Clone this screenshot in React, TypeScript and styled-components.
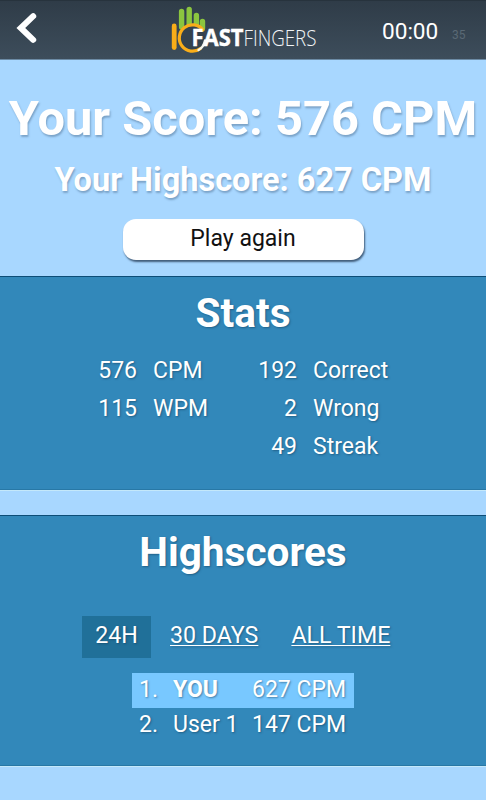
import React from "react";
import styled, { createGlobalStyle, css } from "styled-components";

const GlobalStyle = createGlobalStyle`
  * { box-sizing: border-box; }
  body {
    margin: 0;
    background: #a8d7ff;
    font-family: Roboto, "Liberation Sans", sans-serif;
    overflow: hidden;
  }
`;

const Page = styled.main`
  display: flex;
  flex-direction: column;
  width: 486px;
  height: 800px;
  background: #a8d7ff;
  color: #fff;
  font-size: 23px;
  line-height: 38px;
`;

const Header = styled.header`
  display: flex;
  align-items: flex-start;
  flex: none;
  height: 60px;
  background: linear-gradient(#2f3c48, #3d4d5b);
  border-top: 1px solid #27333d;
  border-bottom: 1px solid #6c8ba5;
`;

const BackButton = styled.button`
  width: 60px;
  height: 58px;
  flex: none;
  padding: 0;
  border: 0;
  background: none;
`;

const LogoLink = styled.a`
  display: block;
  width: 150px;
  height: 56px;
  margin-left: 110px;
`;

const Timer = styled.time`
  margin: 12px 0 0 62px;
  width: 56px;
  font-size: 22.6px;
  white-space: nowrap;
`;

const Remaining = styled.span`
  margin: 15px 0 0 14px;
  font-size: 12px;
  color: #5a6975;
`;

const Hero = styled.section`
  display: flex;
  flex-direction: column;
  align-items: center;
  flex: none;
  height: 216px;
  white-space: nowrap;
`;

const Title = styled.h1`
  margin: 34px 0 0;
  font-size: 48.8px;
  line-height: 50px;
  font-weight: 700;
  text-shadow: 1px 2px 2px rgba(50, 80, 110, 0.38);
`;

const Subtitle = styled.h2`
  margin: 16px 0 0;
  font-size: 32.5px;
  line-height: 40px;
  font-weight: 700;
  text-shadow: 1px 2px 2px rgba(50, 80, 110, 0.38);
`;

const PlayButton = styled.button`
  width: 241px;
  height: 41px;
  margin: 19px 0 0;
  padding: 0 0 2px;
  border: 0;
  border-radius: 13px;
  background: #fff;
  color: #111;
  font: 400 23px/38px Roboto, sans-serif;
  box-shadow: 1px 2px 2px rgba(20, 40, 65, 0.7);
`;

const Panel = styled.section<{ $height: number }>`
  display: flex;
  flex-direction: column;
  align-items: center;
  flex: none;
  height: ${(p) => p.$height}px;
  background: #3288ba;
  border-top: 1px solid #0d4d77;
  border-bottom: 1px solid #2878a6;
  box-shadow: 0 1px 0 #c4e8fa;
  text-shadow: 1px 1px 2px rgba(15, 55, 85, 0.5);
`;

const PanelTitle = styled.h2`
  margin: 11px 0 1px;
  font-size: 40.6px;
  line-height: 50px;
  font-weight: 700;
`;

const StatColumns = styled.div`
  display: flex;
  width: 290px;
  margin-top: 13px;
  gap: 50px;
`;

const StatList = styled.dl`
  display: grid;
  grid-template-columns: 39px auto;
  align-content: start;
  column-gap: 16px;
  margin: 0;

  dt { text-align: right; }
  dd { margin: 0; }
`;

const Tabs = styled.nav`
  display: flex;
  width: 322px;
  margin-top: 38px;
  font-size: 23.2px;
  line-height: 39px;
`;

const Tab = styled.a<{ $active?: boolean }>`
  flex: none;
  height: 42px;
  margin-right: 33px;
  color: inherit;
  white-space: nowrap;
  text-decoration: underline;
  text-decoration-thickness: 1px;
  text-underline-offset: 2px;
  ${(p) =>
    p.$active &&
    css`
      width: 69px;
      margin-right: 19px;
      background: #207099;
      text-align: center;
      text-decoration: none;
    `}
`;

const Ranking = styled.ol`
  width: 222px;
  margin: 15px 0 0;
  padding: 0;
  list-style: none;
`;

const RankingRow = styled.li<{ $own?: boolean }>`
  display: grid;
  grid-template-columns: 34px 79px auto;
  height: 35px;
  padding-left: 7px;
  line-height: 34px;
  white-space: nowrap;
  background: ${(p) => (p.$own ? "#78c8ff" : "transparent")};
`;

const PlayerName = styled.span<{ $own?: boolean }>`
  font-weight: ${(p) => (p.$own ? 700 : 400)};
`;

const Gap = styled.div`
  flex: none;
  height: 25px;
`;

const ratings = [
  [["576", "CPM"], ["115", "WPM"]],
  [["192", "Correct"], ["2", "Wrong"], ["49", "Streak"]],
];

const players = [
  { name: "YOU", score: "627 CPM", own: true },
  { name: "User 1", score: "147 CPM", own: false },
];

function Logo() {
  return (
    <svg width="150" height="56" viewBox="170 1 150 56" overflow="visible" role="img" aria-label="10FastFingers">
      <g fill="none" strokeLinecap="round">
        <path d="M181.6 11.5V27M189.2 9.5V25M196.4 15.5V26M202.5 21.5V28" stroke="#8bc53f" strokeWidth="5.4" />
        <path d="M174.2 26V47.6" stroke="#f9ad19" strokeWidth="4.8" />
        <circle cx="192" cy="38.5" r="13" fill="#34424e" />
        <path d="M203 30A13.2 13.2 0 1 0 200.5 48.5" stroke="#f9ad19" strokeWidth="3.2" />
        <path d="M198.5 50Q203.5 47.5 205 40.5" stroke="#f4f5ed" strokeWidth="2.4" />
      </g>
      <text x="191.5" y="46" fill="#fff" stroke="#fff" strokeWidth=".4" fontFamily="Open Sans, sans-serif" fontWeight="700" fontSize="22.5" textLength="52" lengthAdjust="spacingAndGlyphs">FAST</text>
      <text x="243.5" y="46" fill="#f2f5f7" fontFamily="Open Sans, sans-serif" fontWeight="300" fontSize="22.5" textLength="73" lengthAdjust="spacingAndGlyphs">FINGERS</text>
    </svg>
  );
}

export default function App() {
  return (
    <>
      <GlobalStyle />
      <Page>
        <Header>
          <BackButton aria-label="Back">
            <svg width="60" height="58" viewBox="0 1 60 58">
              <path d="M33.2 16.2L20.8 28L33.2 39.8" fill="none" stroke="#fff" strokeWidth="6" strokeLinecap="round" />
            </svg>
          </BackButton>
          <LogoLink><Logo /></LogoLink>
          <Timer>00:00</Timer>
          <Remaining>35</Remaining>
        </Header>
        <Hero>
          <Title>Your Score: 576 CPM</Title>
          <Subtitle>Your Highscore: 627 CPM</Subtitle>
          <PlayButton>Play again</PlayButton>
        </Hero>
        <Panel $height={214}>
          <PanelTitle>Stats</PanelTitle>
          <StatColumns>
            {ratings.map((rows, index) => (
              <StatList key={index}>
                {rows.map(([value, label]) => (
                  <React.Fragment key={label}>
                    <dt>{value}</dt>
                    <dd>{label}</dd>
                  </React.Fragment>
                ))}
              </StatList>
            ))}
          </StatColumns>
        </Panel>
        <Gap />
        <Panel $height={251}>
          <PanelTitle>Highscores</PanelTitle>
          <Tabs>
            <Tab $active>24H</Tab>
            <Tab>30 DAYS</Tab>
            <Tab>ALL TIME</Tab>
          </Tabs>
          <Ranking>
            {players.map((player, index) => (
              <RankingRow key={player.name} $own={player.own}>
                <span>{index + 1}.</span>
                <PlayerName $own={player.own}>{player.name}</PlayerName>
                <span>{player.score}</span>
              </RankingRow>
            ))}
          </Ranking>
        </Panel>
      </Page>
    </>
  );
}
